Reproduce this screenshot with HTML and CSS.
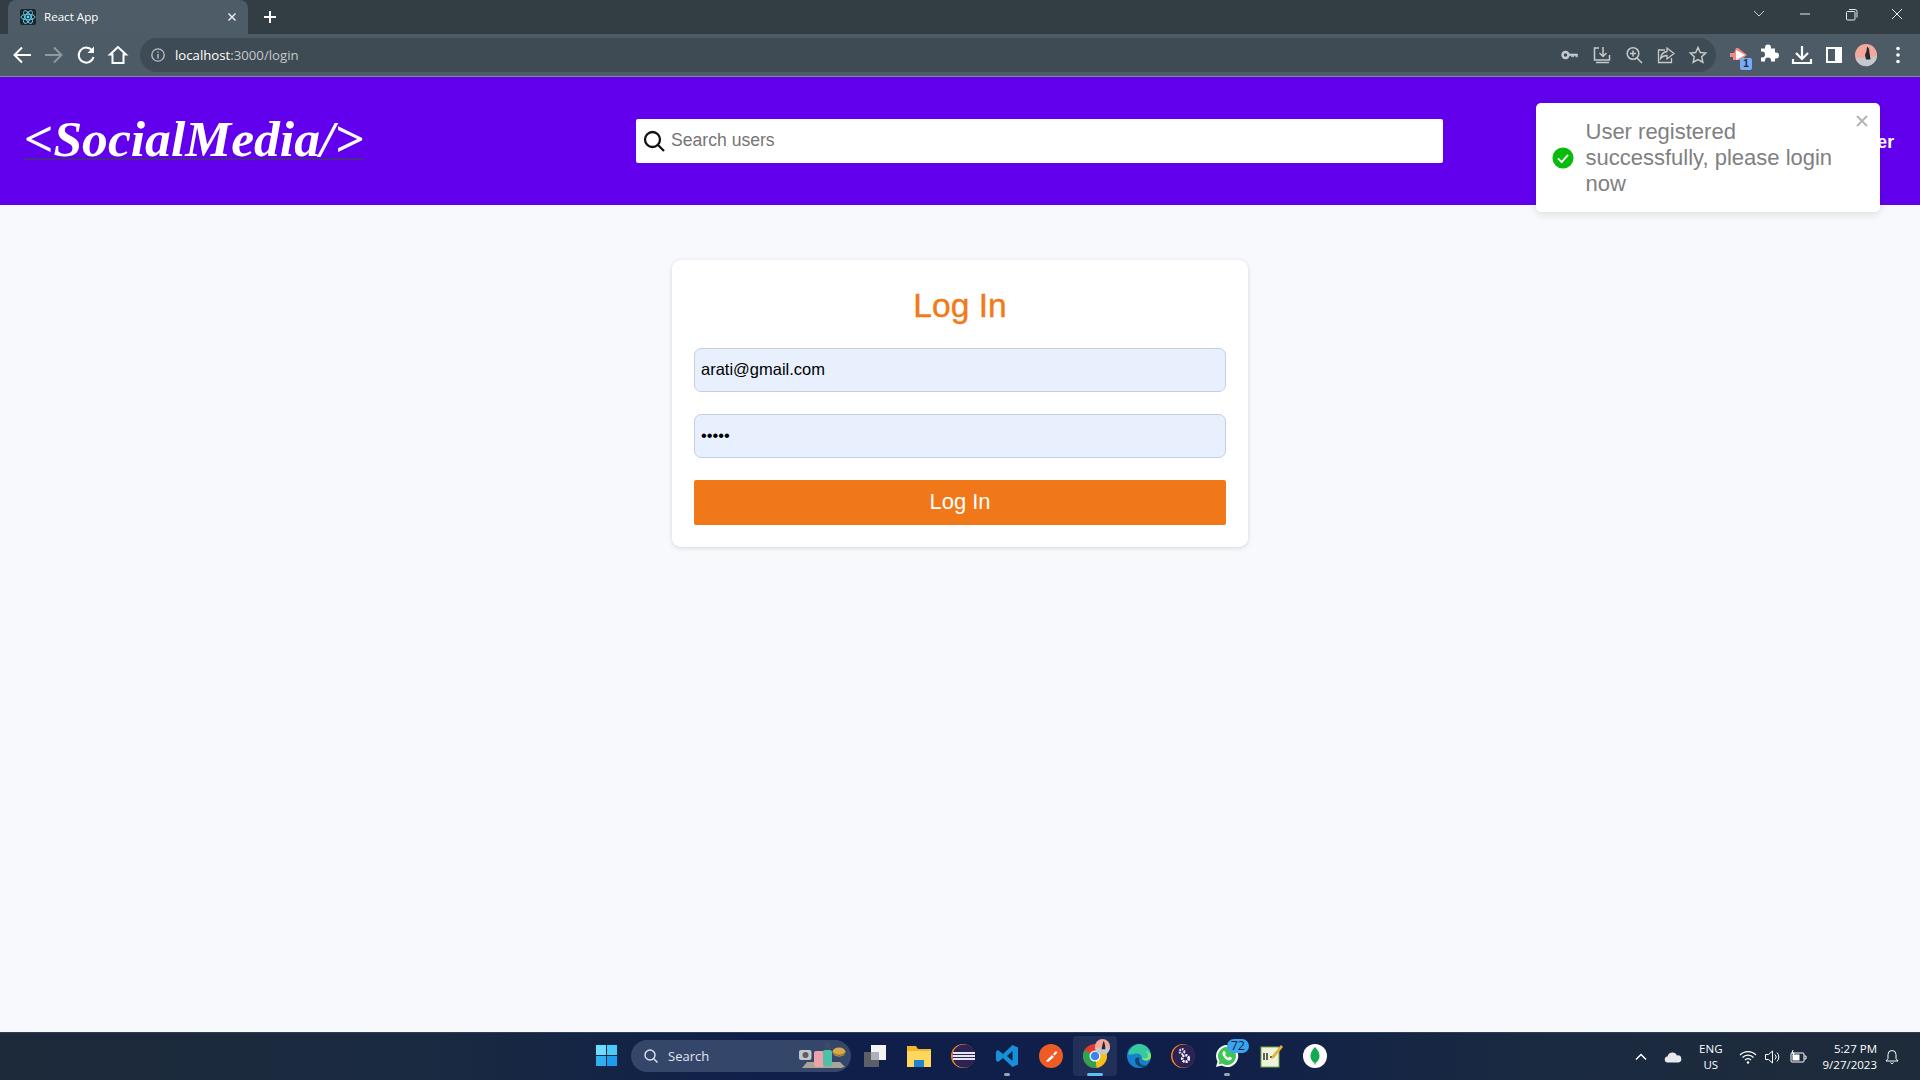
FILE: index.html
```html
<!DOCTYPE html>
<html lang="en">
<head>
<meta charset="utf-8">
<title>React App</title>
<link rel="stylesheet" href="styles.css">
</head>
<body>
<div class="screen">
  <div class="tabstrip">
    <div class="tab">
      <svg class="favicon" viewBox="0 0 16 16"><rect width="16" height="16" rx="2" fill="#20232a"/><g fill="none" stroke="#61dafb" stroke-width=".9"><ellipse cx="8" cy="8" rx="7" ry="2.8"/><ellipse cx="8" cy="8" rx="7" ry="2.8" transform="rotate(60 8 8)"/><ellipse cx="8" cy="8" rx="7" ry="2.8" transform="rotate(120 8 8)"/></g><circle cx="8" cy="8" r="1.4" fill="#61dafb"/></svg>
      <span class="tab-title">React App</span>
      <svg class="tab-close" viewBox="0 0 10 10"><path d="M1.5 1.5l7 7M8.5 1.5l-7 7" stroke="#e8eaed" stroke-width="1.5"/></svg>
    </div>
    <svg class="new-tab" viewBox="0 0 14 14"><path d="M7 1v12M1 7h12" stroke="#fff" stroke-width="2"/></svg>
    <div class="window-controls">
      <svg class="win-btn" viewBox="0 0 46 28"><path d="M18 11l5 5 5-5" fill="none" stroke="#c8cdd0" stroke-width="1"/></svg>
      <svg class="win-btn" viewBox="0 0 46 28"><path d="M18 14h10" stroke="#e8eaed" stroke-width="1"/></svg>
      <svg class="win-btn" viewBox="0 0 46 28"><path d="M19.5 11.5h6.500a1 1 0 0 1 1 1v6.500a1 1 0 0 1-1 1h-6.500a1 1 0 0 1-1-1v-6.500a1 1 0 0 1 1-1zM21 9.500h6a2 2 0 0 1 2 2v6" fill="none" stroke="#e8eaed" stroke-width="1"/></svg>
      <svg class="win-btn" viewBox="0 0 46 28"><path d="M18 9l10 10M28 9l-10 10" stroke="#e8eaed" stroke-width="1"/></svg>
    </div>
  </div>
  <div class="toolbar">
    <svg class="tool" viewBox="0 0 32 32"><path d="M25 16H9M16 8.500L8.500 16l7.500 7.500" fill="none" stroke="#fff" stroke-width="2"/></svg>
    <svg class="tool" viewBox="0 0 32 32"><path d="M7 16h16M16 8.500l7.500 7.500-7.500 7.500" fill="none" stroke="#8f999f" stroke-width="2"/></svg>
    <svg class="tool" viewBox="0 0 32 32"><path d="M22.500 12a7.500 7.500 0 1 0 1 6" fill="none" stroke="#fff" stroke-width="2"/><path d="M24 7.500v6.500h-6.500z" fill="#fff"/></svg>
    <svg class="tool" viewBox="0 0 32 32"><path d="M16 8l-8 7.500h2.500V24h11v-8.500H24z" fill="none" stroke="#fff" stroke-width="2"/></svg>
    <div class="omnibox">
      <svg class="info" viewBox="0 0 16 16"><circle cx="8" cy="8" r="6.200" fill="none" stroke="#b9c0c4" stroke-width="1.300"/><path d="M8 7v4.500M8 4.500v1.300" stroke="#b9c0c4" stroke-width="1.400"/></svg>
      <span class="url"><span class="host">localhost</span>:3000/login</span>
      <div class="omni-actions">
        <svg class="omni-icon" viewBox="0 0 32 32"><circle cx="11.500" cy="16" r="3" fill="none" stroke="#c4cacd" stroke-width="2.400"/><path d="M14 15h9.500v2.800h-1.800v-1.300h-2v1.300h-2.200v-1.300H14z" fill="#c4cacd" stroke="#c4cacd" stroke-width=".6"/></svg>
        <svg class="omni-icon" viewBox="0 0 32 32"><path d="M13 9H8.500v12h15V16M17 8v9M13.500 14l3.500 3.500 3.500-3.500M10 23.500h13" fill="none" stroke="#c4cacd" stroke-width="1.500"/></svg>
        <svg class="omni-icon" viewBox="0 0 32 32"><circle cx="15" cy="14.500" r="5.800" fill="none" stroke="#c4cacd" stroke-width="1.500"/><path d="M19 19l5 5M12 14.500h6M15 11.500v6" stroke="#c4cacd" stroke-width="1.500"/></svg>
        <svg class="omni-icon" viewBox="0 0 32 32"><path d="M15 11H8.500v12.500h13V19M17 9v3.500c-4 .5-6 3-6.500 7 2-2.500 3.500-3 6.500-3V20l7-5.500z" fill="none" stroke="#c4cacd" stroke-width="1.300"/></svg>
        <svg class="omni-icon" viewBox="0 0 32 32"><path d="M16 8.500l2.300 5 5.400.6-4 3.700 1.100 5.400-4.800-2.700-4.800 2.700 1.100-5.400-4-3.700 5.400-.6z" fill="none" stroke="#c4cacd" stroke-width="1.500"/></svg>
      </div>
    </div>
    <div class="extensions">
      <div class="ext">
        <svg class="tool" viewBox="0 0 32 32"><path d="M8 14h4l2-5h2l9 7-6 5h-8v-3H8z" fill="#f28b82"/><path d="M14 11l9 5-9 5z" fill="#fff"/></svg>
        <span class="ext-badge">1</span>
      </div>
      <svg class="tool" viewBox="0 0 32 32"><path d="M9 12h4v-1a3 3 0 0 1 6 0v1h4v4h1a3 3 0 0 1 0 6h-1v3h-4v-1a3 3 0 0 0-6 0v1H9v-4h1a3 3 0 0 0 0-6H9z" transform="translate(-2 -2.500)" fill="#fff"/></svg>
      <svg class="tool" viewBox="0 0 32 32"><path d="M16 7v12M10 14l6 6 6-6M7 20v4h18v-4" fill="none" stroke="#fff" stroke-width="2.200"/></svg>
      <svg class="tool" viewBox="0 0 32 32"><rect x="9" y="9" width="14" height="14" fill="none" stroke="#fff" stroke-width="2"/><rect x="17" y="9" width="6" height="14" fill="#fff"/></svg>
      <svg class="tool" viewBox="0 0 32 32"><circle cx="16" cy="16" r="11" fill="#f2a99b"/><path d="M5.500 19.500L27 17a11 11 0 0 1-21.500 2.500z" fill="#c5c8cc"/><path d="M17 8c1.500 0 2.300 1.500 2.300 4.500l1.200 8h-4.500l-1-4.500 1.500-4z" fill="#26282c"/></svg>
      <svg class="tool" viewBox="0 0 32 32"><g fill="#fff"><circle cx="16" cy="9.500" r="1.800"/><circle cx="16" cy="16" r="1.800"/><circle cx="16" cy="22.500" r="1.800"/></g></svg>
    </div>
  </div>

  <main class="page">
    <header class="appbar">
      <a class="logo" href="#">&lt;SocialMedia/&gt;</a>
      <div class="search">
        <svg class="search-icon" viewBox="0 0 24 24"><circle cx="10.500" cy="10.500" r="7.500" fill="none" stroke="#111" stroke-width="2.300"/><path d="M16 16l6 6" stroke="#111" stroke-width="2.300"/></svg>
        <input class="search-input" type="text" placeholder="Search users">
      </div>
      <nav class="nav"><a class="nav-link" href="#">Register</a></nav>
    </header>
    <section class="content">
      <form class="card">
        <h1 class="card-title">Log In</h1>
        <input class="field" type="email" value="arati@gmail.com">
        <input class="field" type="password" value="arati">
        <button class="submit" type="button">Log In</button>
      </form>
    </section>
    <div class="toast">
      <svg class="toast-icon" viewBox="0 0 24 24"><circle cx="12" cy="12" r="11.500" fill="#07bc0c"/><path d="M6.500 12.500l4 4 7-8" fill="none" stroke="#fff" stroke-width="2"/></svg>
      <div class="toast-text">User registered successfully, please login now</div>
      <svg class="toast-close" viewBox="0 0 12 12"><path d="M1 1l10 10M11 1L1 11" stroke="#b5b5b5" stroke-width="2"/></svg>
    </div>
  </main>

  <footer class="taskbar">
    <div class="taskbar-center">
      <svg class="start" viewBox="0 0 24 24"><rect x="1" y="1" width="10.500" height="10.500" fill="#6fdcfb"/><rect x="12.500" y="1" width="10.500" height="10.500" fill="#4ccaf7"/><rect x="1" y="12.500" width="10.500" height="10.500" fill="#2fb0ef"/><rect x="12.500" y="12.500" width="10.500" height="10.500" fill="#1e9beb"/></svg>
      <div class="task-search">
        <svg class="task-search-icon" viewBox="0 0 16 16"><circle cx="7" cy="7" r="5" fill="none" stroke="#dfe4ee" stroke-width="1.400"/><path d="M10.500 10.500l4 4" stroke="#dfe4ee" stroke-width="1.400"/></svg>
        <span class="task-search-text">Search</span>
        <svg class="task-search-art" viewBox="0 0 48 28"><path d="M3 26l5-6h33l5 5-4 1z" fill="#a9a49a"/><rect x="0" y="8" width="12.500" height="10" rx="2" fill="#c3c6c8"/><circle cx="6.500" cy="13" r="3" fill="#5b5f63"/><rect x="15" y="9" width="10" height="16" rx="2" fill="#eda2a8"/><path d="M27 8V2h3v6" fill="none" stroke="#4a5268"/><rect x="24" y="8" width="9" height="16" rx="2" fill="#4fc0a7"/><ellipse cx="40" cy="10" rx="6.500" ry="4.500" fill="#d7a94a"/><path d="M34 11c3 3 9 3 12 0" fill="none" stroke="#7a5a2a"/></svg>
      </div>
      <span class="task-item"><svg class="task-icon" viewBox="0 0 24 24"><rect x="1" y="8" width="15" height="15" fill="#5b5f66"/><rect x="8" y="1" width="15" height="15" fill="#f2f3f5"/><rect x="8" y="8" width="8" height="8" fill="#aeb2b8"/></svg></span>
      <span class="task-item"><svg class="task-icon" viewBox="0 0 24 24"><path d="M0 2h9l2 3h13v18H0z" fill="#f4b62c"/><path d="M0 7h24v16H0z" fill="#ffd75e"/><rect x="7" y="16" width="10" height="7" fill="#1d85d0"/></svg></span>
      <span class="task-item"><svg class="task-icon" viewBox="0 0 24 24"><circle cx="12" cy="12" r="12" fill="#f5871f"/><circle cx="13" cy="12" r="11.500" fill="#2c2255"/><path d="M2 9h22M1.500 12h22.500M2 15h22" stroke="#e6e3f2" stroke-width="1.800"/></svg></span>
      <span class="task-item task-running"><svg class="task-icon" viewBox="0 0 24 24"><path d="M17.500 1L23 3.500v17L17.500 23 8 14l-5 4-2-1.500V7.500L3 6l5 4zM17.500 7l-5.500 5 5.500 5z" fill="#1790dc"/></svg></span>
      <span class="task-item"><svg class="task-icon" viewBox="0 0 24 24"><circle cx="12" cy="12" r="12" fill="#ef5b25"/><path d="M7 17l6-6 2 2-6 5zM14 10l3-3 1.500 1.500-3 3z" fill="#fff"/></svg></span>
      <span class="task-item task-active"><svg class="task-icon" viewBox="0 0 24 24"><circle cx="12" cy="12" r="12" fill="#e33b2e"/><path d="M12 12L22.400 6a12 12 0 0 1-9 17.900z" fill="#f5c01a"/><path d="M12 12l1.400 11.900A12 12 0 0 1 1.600 6z" fill="#2ea44f"/><circle cx="12" cy="12" r="5.500" fill="#fff"/><circle cx="12" cy="12" r="4.300" fill="#3d82f0"/></svg><svg class="task-overlay" viewBox="0 0 16 16"><circle cx="8" cy="8" r="8" fill="#f2a99b"/><path d="M0 9h16a8 8 0 0 1-16 0z" fill="#c5c8cc"/><path d="M9 2c1 1 2 4 2 9H7l1-5z" fill="#26282c"/></svg></span>
      <span class="task-item"><svg class="task-icon" viewBox="0 0 24 24"><circle cx="12" cy="12" r="12" fill="#1682cf"/><path d="M1 10C3 3.500 8 0 12 0c7 0 12 5.500 12 12 0 3-2.500 4.500-5 4.500-3 0-4-1-4-2.500 0-3-3-5-6-4.500-3 .5-6 2-8 .5z" fill="#36c9a0"/><path d="M24 12c0 3-2.500 4.500-5 4.500-2 0-4-1-4-2.500 2 .5 5 1 6-1.500.5-1.500-1-5-3-6 3 1 6 3 6 5.500z" fill="#8be36a"/><path d="M8 16c0 4 3 7 8 7 2 0 4-1 5-2-4 1-7 0-8-2-1.500-2-1-4 0-5-3-1-5 0-5 2z" fill="#13456f"/></svg></span>
      <span class="task-item"><svg class="task-icon" viewBox="0 0 24 24"><circle cx="12" cy="12" r="12" fill="#f5871f"/><circle cx="13" cy="12" r="11.500" fill="#2c2255"/><circle cx="11" cy="7.500" r="2.300" fill="none" stroke="#dfdcec" stroke-width="2.200" stroke-dasharray="1.500 .9"/><circle cx="14.500" cy="14.500" r="3.300" fill="none" stroke="#fff" stroke-width="2.600" stroke-dasharray="2 1"/></svg></span>
      <span class="task-item task-running"><svg class="task-icon" viewBox="0 0 24 24"><path d="M12 1a11 11 0 0 0-9.500 16.500L1 23l5.700-1.500A11 11 0 1 0 12 1z" fill="#fff"/><path d="M12 3a9 9 0 0 0-7.500 14l-1 3.500 3.500-1A9 9 0 1 0 12 3z" fill="#3dc654"/><path d="M8.500 7c-1 1-1.500 2.500-.5 4.500 1.500 3 3.500 4.500 6 5 1.500 0 3-1 3-2.500l-2.500-1.500-1.200 1.200c-1.500-.5-2.800-2-3.300-3.200L11 9.500 9.800 7z" fill="#fff"/></svg><span class="task-badge">72</span></span>
      <span class="task-item"><svg class="task-icon" viewBox="0 0 24 24"><rect x="2" y="3" width="18" height="20" fill="#eef4dc" stroke="#74a84a"/><path d="M5 9v7M8 9v7M11 13h4" stroke="#333" stroke-width="1.500"/><path d="M22 1l2 2-9 11-3 1 1-3z" fill="#e8b13a"/></svg></span>
      <span class="task-item"><svg class="task-icon" viewBox="0 0 24 24"><circle cx="12" cy="12" r="12" fill="#fff"/><path d="M12 3c3 3 4.500 6 4.500 9 0 3.500-2.500 6-3.800 6.800L12 21.500l-.7-2.700C10 18 7.500 15.500 7.500 12 7.500 9 9 6 12 3z" fill="#13aa52"/></svg></span>
    </div>
    <div class="tray">
      <svg class="tray-chevron" viewBox="0 0 12 8"><path d="M1 6.500l5-5 5 5" fill="none" stroke="#fff" stroke-width="1.500"/></svg>
      <svg class="tray-cloud" viewBox="0 0 18 12"><path d="M4 11.500A3 3 0 0 1 3.500 5.500 5 5 0 0 1 13 4.500a3.500 3.500 0 0 1 1.500 7z" fill="#e7e9ec"/></svg>
      <div class="tray-lang"><span>ENG</span><span>US</span></div>
      <svg class="tray-icon" viewBox="0 0 18 16"><path d="M1 6a11 11 0 0 1 16 0M3.500 8.500a7.500 7.500 0 0 1 11 0M6 11a4 4 0 0 1 6 0" fill="none" stroke="#fff" stroke-width="1.200"/><circle cx="9" cy="13.500" r="1.200" fill="#fff"/></svg>
      <svg class="tray-icon" viewBox="0 0 18 16"><path d="M1.500 5.500h3l4-3.500v12l-4-3.500h-3zM11 5.500a3.500 3.500 0 0 1 0 5M13 3.500a6.500 6.500 0 0 1 0 9" fill="none" stroke="#fff" stroke-width="1"/></svg>
      <svg class="tray-icon" viewBox="0 0 18 16"><rect x="2" y="4" width="13" height="9" rx="1" fill="none" stroke="#fff" stroke-width="1"/><rect x="3.500" y="5.500" width="7" height="6" fill="#fff"/><path d="M15.500 7h1.500v3h-1.500M4 1l-1 3h2l-1 3" fill="none" stroke="#fff"/></svg>
      <div class="clock"><span>5:27 PM</span><span>9/27/2023</span></div>
      <svg class="tray-bell" viewBox="0 0 16 16"><path d="M8 1.500a4 4 0 0 0-4 4v4l-2 2.500h12l-2-2.500v-4a4 4 0 0 0-4-4zM6.500 13.500a1.600 1.600 0 0 0 3 0" fill="none" stroke="#fff" stroke-width="1"/></svg>
    </div>
  </footer>
</div>
</body>
</html>
```
FILE: styles.css
```css
* { box-sizing: border-box; }
html, body { margin: 0; height: 100%; overflow: hidden; }
body { font-family: "Liberation Sans", Arial, sans-serif; }
svg { display: block; flex: none; }

.screen { display: flex; flex-direction: column; width: 1920px; height: 1080px; }

/* Browser chrome */
.tabstrip { display: flex; align-items: stretch; height: 34px; background: #333d44; flex: none; }
.tab { display: flex; align-items: center; width: 240px; margin-left: 8px; padding: 0 11px 0 12px; background: #4d5c66; border-radius: 8px 8px 0 0; }
.favicon { width: 16px; height: 16px; }
.tab-title { margin: 0 0 1px 8px; color: #fff; font: 11.6px "Open Sans", sans-serif; flex: 1; }
.tab-close { width: 10px; height: 10px; }
.new-tab { width: 14px; height: 14px; margin: 10px 0 0 15px; }
.window-controls { display: flex; margin-left: auto; }
.win-btn { width: 46px; height: 28px; }
.toolbar { display: flex; align-items: center; height: 43px; flex: none; padding: 0 6px 1px 6px; background: #4c5b66; border-bottom: 1px solid #7d8a85; }
.tool { width: 32px; height: 32px; }
.omnibox { display: flex; align-items: center; width: 1576px; height: 34px; margin-left: 6px; padding-left: 10px; background: #3f4b54; border-radius: 17px; }
.info { width: 16px; height: 16px; }
.url { margin-left: 9px; color: #c3c8cb; font: 13.2px "Open Sans", sans-serif; }
.host { color: #fff; }
.omni-actions { display: flex; margin-left: auto; padding-right: 2px; }
.omni-icon { width: 32px; height: 32px; }
.extensions { display: flex; margin-left: 6px; }
.ext { position: relative; width: 32px; height: 32px; }
.ext-badge { position: absolute; left: 18px; bottom: 1px; width: 12px; height: 12px; background: #7baaf7; border-radius: 2px; color: #1b2a3a; font: bold 10px/12px "Liberation Sans", sans-serif; text-align: center; }

/* Page */
.page { position: relative; flex: 1; display: flex; flex-direction: column; background: #f8f9fd; min-height: 0; }
.appbar { display: grid; grid-template-columns: 636px 807px 1fr; align-items: center; height: 128px; background: #6200ee; flex: none; }
.logo { margin-top: -5px; padding-left: 24px; color: #fff; font: italic bold 51.6px/60px "Liberation Serif", serif; text-decoration: underline; text-decoration-color: #4a2a8f; text-decoration-thickness: 2px; text-underline-offset: 2px; white-space: nowrap; }
.search { display: flex; align-items: center; height: 44px; padding-left: 6px; background: #fff; border-radius: 2px; }
.search-icon { width: 24px; height: 24px; margin-top: -1px; }
.search-input { flex: 1; height: 100%; margin-left: 5px; padding: 0 0 2px; border: 0; outline: 0; background: transparent; font: 17.6px "Liberation Sans", sans-serif; }
.search-input::placeholder { color: #757575; opacity: 1; }
.nav { display: flex; justify-content: flex-end; padding: 2px 26px 0 0; }
.nav-link { color: #fff; font-size: 17.6px; font-weight: bold; text-decoration: none; }
.content { flex: 1; display: flex; justify-content: center; align-items: flex-start; padding-top: 55px; }
.card { display: flex; flex-direction: column; gap: 22px; width: 576px; padding: 24px 22px 22px; background: #fff; border-radius: 9px; box-shadow: 0 1px 5px rgba(0, 0, 0, .14); }
.card-title { margin: 0 0 -2px; color: #f27a18; font-size: 33.6px; font-weight: normal; line-height: 44px; text-align: center; -webkit-text-stroke: .4px #f27a18; }
.field { height: 44px; padding: 0 6px 2px; background: #e8f0fe; border: 1px solid #c6cfe2; border-radius: 7px; outline: 0; color: #000; font: 16.5px "Liberation Sans", sans-serif; }
.submit { height: 45px; padding: 0 0 2px; border: 0; border-radius: 2px; background: #f07818; color: #fff; font: 22px "Liberation Sans", sans-serif; }
.toast { position: absolute; top: 26px; left: 1536px; display: flex; align-items: center; width: 344px; height: 109px; padding: 0 16px; background: #fff; border-radius: 5px; box-shadow: 0 2px 10px rgba(0, 0, 0, .12); }
.toast-icon { width: 22px; height: 22px; }
.toast-text { width: 270px; margin-left: 11.5px; color: #808080; font-size: 22px; line-height: 26px; }
.toast-close { position: absolute; top: 12px; right: 12px; width: 12px; height: 12px; }

/* Taskbar */
.taskbar { position: relative; display: flex; align-items: center; height: 48px; flex: none; padding-bottom: 2px; background: linear-gradient(90deg, #1d2a3a 0%, #1a2a40 22%, #0f1f4a 40%, #0f1f4a 62%, #1a2a40 80%, #1e2b3a 100%); border-top: 1px solid #2e3e54; }
.taskbar-center { display: flex; align-items: center; margin-left: 595px; }
.start { width: 23px; height: 23px; }
.task-search { display: flex; align-items: center; width: 220px; height: 32px; margin-left: 13px; padding-left: 12px; background: #35466b; border-radius: 16px; }
.task-search-icon { width: 16px; height: 16px; }
.task-search-text { margin-left: 9px; color: #e0e4ec; font: 13px "Open Sans", sans-serif; }
.task-search-art { width: 48px; height: 28px; margin-left: auto; margin-right: 4px; }
.task-item { position: relative; display: flex; align-items: center; justify-content: center; width: 44px; height: 40px; }
.task-search + .task-item { margin-left: 2px; }
.task-icon { width: 24px; height: 24px; }
.task-running::after { content: ""; position: absolute; bottom: 0; left: 19px; width: 6px; height: 3px; border-radius: 2px; background: #9aa3b0; }
.task-active { background: rgba(255, 255, 255, .08); border-radius: 4px; }
.task-active::after { content: ""; position: absolute; bottom: 0; left: 14px; width: 16px; height: 3px; border-radius: 2px; background: #5cc2f5; }
.task-overlay { position: absolute; top: 3px; right: 7px; width: 15px; height: 15px; }
.task-badge { position: absolute; top: 3px; right: 0; padding: 0 4px; background: #3aa6f0; border-radius: 8px; color: #10213f; font: 12.5px/14px "Open Sans", sans-serif; }
.tray { position: absolute; top: 0; bottom: 0; right: 0; display: flex; align-items: center; color: #fff; font: 11.5px/16px "Open Sans", sans-serif; }
.tray-chevron { width: 12px; height: 8px; margin-right: 17px; }
.tray-cloud { width: 18px; height: 12px; margin-right: 17px; }
.tray-lang { display: flex; flex-direction: column; align-items: center; margin-right: 16px; }
.tray-icon { width: 18px; height: 16px; margin-right: 7px; }
.clock { display: flex; flex-direction: column; align-items: flex-end; margin-left: 9px; }
.tray-bell { width: 16px; height: 16px; margin: 0 20px 0 7px; }
```
